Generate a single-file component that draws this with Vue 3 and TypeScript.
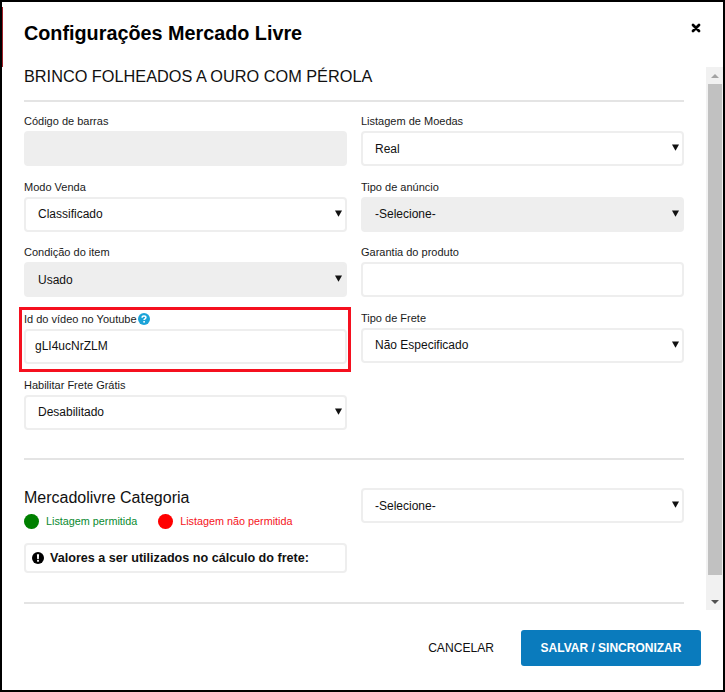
<script setup lang="ts">
interface Field {
  label: string;
  kind: "input" | "select";
  value: string;
  disabled?: boolean;
  help?: boolean;
  highlight?: boolean;
}

const leftFields: Field[] = [
  { label: "Código de barras", kind: "input", value: "", disabled: true },
  { label: "Modo Venda", kind: "select", value: "Classificado" },
  { label: "Condição do item", kind: "select", value: "Usado", disabled: true },
  { label: "Id do vídeo no Youtube", kind: "input", value: "gLI4ucNrZLM", help: true, highlight: true },
  { label: "Habilitar Frete Grátis", kind: "select", value: "Desabilitado" },
];

const rightFields: Field[] = [
  { label: "Listagem de Moedas", kind: "select", value: "Real" },
  { label: "Tipo de anúncio", kind: "select", value: "-Selecione-", disabled: true },
  { label: "Garantia do produto", kind: "input", value: "" },
  { label: "Tipo de Frete", kind: "select", value: "Não Especificado" },
];

const columns = [leftFields, rightFields];
</script>

<template>
  <div class="modal">
    <header class="modal-hdr">
      <h1 class="modal-title">Configurações Mercado Livre</h1>
      <button class="close" type="button" aria-label="Fechar">
        <svg viewBox="0 0 10 10" width="10" height="10">
          <path d="M2 2 L8 8 M8 2 L2 8" stroke="#000" stroke-width="2.8" stroke-linecap="round" />
        </svg>
      </button>
    </header>

    <div class="modal-body">
      <div class="content">
        <h2 class="product">BRINCO FOLHEADOS A OURO COM PÉROLA</h2>
        <hr class="sep" />

        <div class="cols">
          <div v-for="(col, i) in columns" :key="i" class="col">
            <div
              v-for="f in col"
              :key="f.label"
              class="field"
              :class="{ highlight: f.highlight }"
            >
              <label class="lbl">
                {{ f.label }}
                <svg v-if="f.help" class="help" viewBox="0 0 12 12" width="12" height="12">
                  <circle cx="6" cy="6" r="6" fill="#1ba3d8" />
                  <path
                    d="M4.1 4.7 C4.1 3.6 5 3 6 3 C7.1 3 7.9 3.7 7.9 4.6 C7.9 5.9 6.1 5.9 6.1 7.1"
                    stroke="#fff"
                    stroke-width="1.5"
                    fill="none"
                  />
                  <rect x="5.3" y="8" width="1.6" height="1.6" fill="#fff" />
                </svg>
              </label>
              <input
                v-if="f.kind === 'input'"
                class="ctl ctl-input"
                :class="{ off: f.disabled }"
                :value="f.value"
                :disabled="f.disabled"
              />
              <div v-else class="select-wrap">
                <select class="ctl ctl-select" :class="{ off: f.disabled }">
                  <option>{{ f.value }}</option>
                </select>
                <svg class="arrow" viewBox="0 0 7 7" width="7" height="7">
                  <path d="M0 0.5 H7 L3.5 6.8 Z" fill="#111" />
                </svg>
              </div>
            </div>
          </div>
        </div>

        <hr class="sep sep-cat" />

        <div class="cat">
          <div class="cat-left">
            <h3 class="cat-title">Mercadolivre Categoria</h3>
            <div class="legend">
              <span class="dot dot-green" />
              <span class="legend-txt txt-green">Listagem permitida</span>
              <span class="dot dot-red" />
              <span class="legend-txt txt-red">Listagem não permitida</span>
            </div>
            <div class="info">
              <svg viewBox="0 0 12 12" width="12" height="12">
                <circle cx="6" cy="6" r="6" fill="#000" />
                <path d="M4.9 2.2 H7.1 L6.8 7 H5.2 Z" fill="#fff" />
                <rect x="5.1" y="7.8" width="1.8" height="1.9" fill="#fff" />
              </svg>
              <span>Valores a ser utilizados no cálculo do frete:</span>
            </div>
          </div>
          <div class="select-wrap">
            <select class="ctl ctl-select">
              <option>-Selecione-</option>
            </select>
            <svg class="arrow" viewBox="0 0 7 7" width="7" height="7">
              <path d="M0 0.5 H7 L3.5 6.8 Z" fill="#111" />
            </svg>
          </div>
        </div>

        <hr class="sep sep-end" />
      </div>

      <div class="scrollbar">
        <svg class="sb-arrow" viewBox="0 0 8 4" width="8" height="4">
          <path d="M4 0 L8 4 H0 Z" fill="#a3a3a3" />
        </svg>
        <div class="sb-track"><div class="sb-thumb" /></div>
        <svg class="sb-arrow" viewBox="0 0 8 4" width="8" height="4">
          <path d="M0 0 H8 L4 4 Z" fill="#505050" />
        </svg>
      </div>
    </div>

    <footer class="modal-ftr">
      <button class="btn-cancel" type="button">CANCELAR</button>
      <button class="btn-save" type="button">SALVAR / SINCRONIZAR</button>
    </footer>
  </div>
</template>

<style>
html,
body {
  margin: 0;
  background: #fff;
}
</style>

<style scoped>
.modal {
  position: relative;
  box-sizing: border-box;
  width: 725px;
  height: 692px;
  border: 2px solid #000;
  background: #fff;
  display: flex;
  flex-direction: column;
  font-family: "Liberation Sans", Arial, sans-serif;
  color: #111;
  overflow: hidden;
}
.modal::before {
  content: "";
  position: absolute;
  left: 0;
  top: 5px;
  width: 1px;
  height: 60px;
  background: #a02028;
}

.modal-hdr {
  height: 65px;
  flex-shrink: 0;
  display: flex;
  align-items: flex-start;
  justify-content: space-between;
  padding: 0 22px;
}
.modal-title {
  margin: 18px 0 0;
  font-size: 19.8px;
  line-height: 26px;
  font-weight: 700;
  color: #000;
}
.close {
  margin: 21px 0 0 0;
  padding: 0;
  border: 0;
  background: none;
  line-height: 0;
}

.modal-body {
  height: 543px;
  flex-shrink: 0;
  display: flex;
}
.content {
  flex: 1;
  min-width: 0;
  padding: 0 22px;
  overflow: hidden;
}
.product {
  margin: 0;
  font-size: 16.3px;
  line-height: 18px;
  font-weight: 400;
}
.sep {
  margin: 0;
  height: 2px;
  border: 0;
  background: #e4e4e4;
}
.product + .sep {
  margin-top: 15px;
}

.cols {
  display: grid;
  grid-template-columns: 323px 323px;
  column-gap: 14px;
  padding-top: 12px;
  height: 343px;
  box-sizing: border-box;
}
.col {
  display: flex;
  flex-direction: column;
}
.field {
  position: relative;
  height: 65.6px;
  flex-shrink: 0;
}
.col:first-child .field:nth-child(3),
.col:first-child .field:nth-child(4) {
  height: 66.4px;
}
.field.highlight::after {
  content: "";
  position: absolute;
  inset: -5px -4px 6px -5px;
  border: 3px solid #f5101f;
  pointer-events: none;
}
.lbl {
  display: flex;
  align-items: center;
  gap: 1px;
  height: 15px;
  margin-bottom: 2px;
  font-size: 11px;
  line-height: 15px;
  color: #1a1a1a;
}

.ctl {
  box-sizing: border-box;
  display: block;
  width: 100%;
  height: 35px;
  margin: 0;
  border: 2px solid #eeeeee;
  border-radius: 4px;
  background: #fff;
  font-family: inherit;
  font-size: 12px;
  color: #111;
  outline: none;
}
.ctl.off {
  background: #eeeeee;
  opacity: 1;
}
.ctl-input {
  padding: 0 9px;
}
.ctl-select {
  appearance: none;
  padding: 0 24px 0 12px;
}
.select-wrap {
  position: relative;
}
.arrow {
  position: absolute;
  right: 5px;
  top: 13px;
  pointer-events: none;
}

.sep-cat {
  margin-top: 13px;
}
.cat {
  display: grid;
  grid-template-columns: 323px 323px;
  column-gap: 14px;
  padding-top: 28px;
}
.cat-left {
  min-width: 0;
}
.cat-title {
  margin: 0;
  font-size: 16px;
  line-height: 20px;
  font-weight: 400;
}
.legend {
  display: flex;
  align-items: center;
  margin-top: 6px;
}
.dot {
  width: 14.5px;
  height: 15px;
  border-radius: 50%;
  flex-shrink: 0;
}
.dot-green {
  background: #008000;
}
.dot-red {
  background: #ff0000;
  margin-left: 21px;
}
.legend-txt {
  font-size: 10.8px;
  line-height: 15px;
  margin-left: 7.5px;
}
.txt-green {
  color: #0a8a30;
}
.txt-red {
  color: #f5141a;
}
.info {
  box-sizing: border-box;
  height: 29.5px;
  margin-top: 14px;
  border: 2px solid #eeeeee;
  border-radius: 4px;
  display: flex;
  align-items: center;
  gap: 6px;
  padding-left: 6px;
  font-size: 12.6px;
  font-weight: 700;
}
.sep-end {
  margin-top: 29px;
}

.scrollbar {
  width: 17px;
  flex-shrink: 0;
  background: #f1f1f1;
  display: flex;
  flex-direction: column;
  align-items: center;
  justify-content: space-between;
}
.sb-arrow {
  flex-shrink: 0;
  margin: 7px 0 6px;
}
.sb-track {
  flex: 1;
  align-self: stretch;
  padding: 0 1px 0 2px;
}
.sb-thumb {
  height: 491px;
  background: #c1c1c1;
}

.modal-ftr {
  flex: 1;
  display: flex;
  justify-content: flex-end;
  align-items: flex-start;
  gap: 27px;
  padding: 20px 22px 0 0;
}
.btn-cancel {
  height: 36px;
  padding: 0;
  border: 0;
  background: none;
  font-family: inherit;
  font-size: 12.1px;
  color: #111;
}
.btn-save {
  width: 180px;
  height: 36px;
  border: 0;
  border-radius: 3px;
  background: #0a7bbd;
  font-family: inherit;
  font-size: 12px;
  font-weight: 700;
  color: #fff;
}
</style>
